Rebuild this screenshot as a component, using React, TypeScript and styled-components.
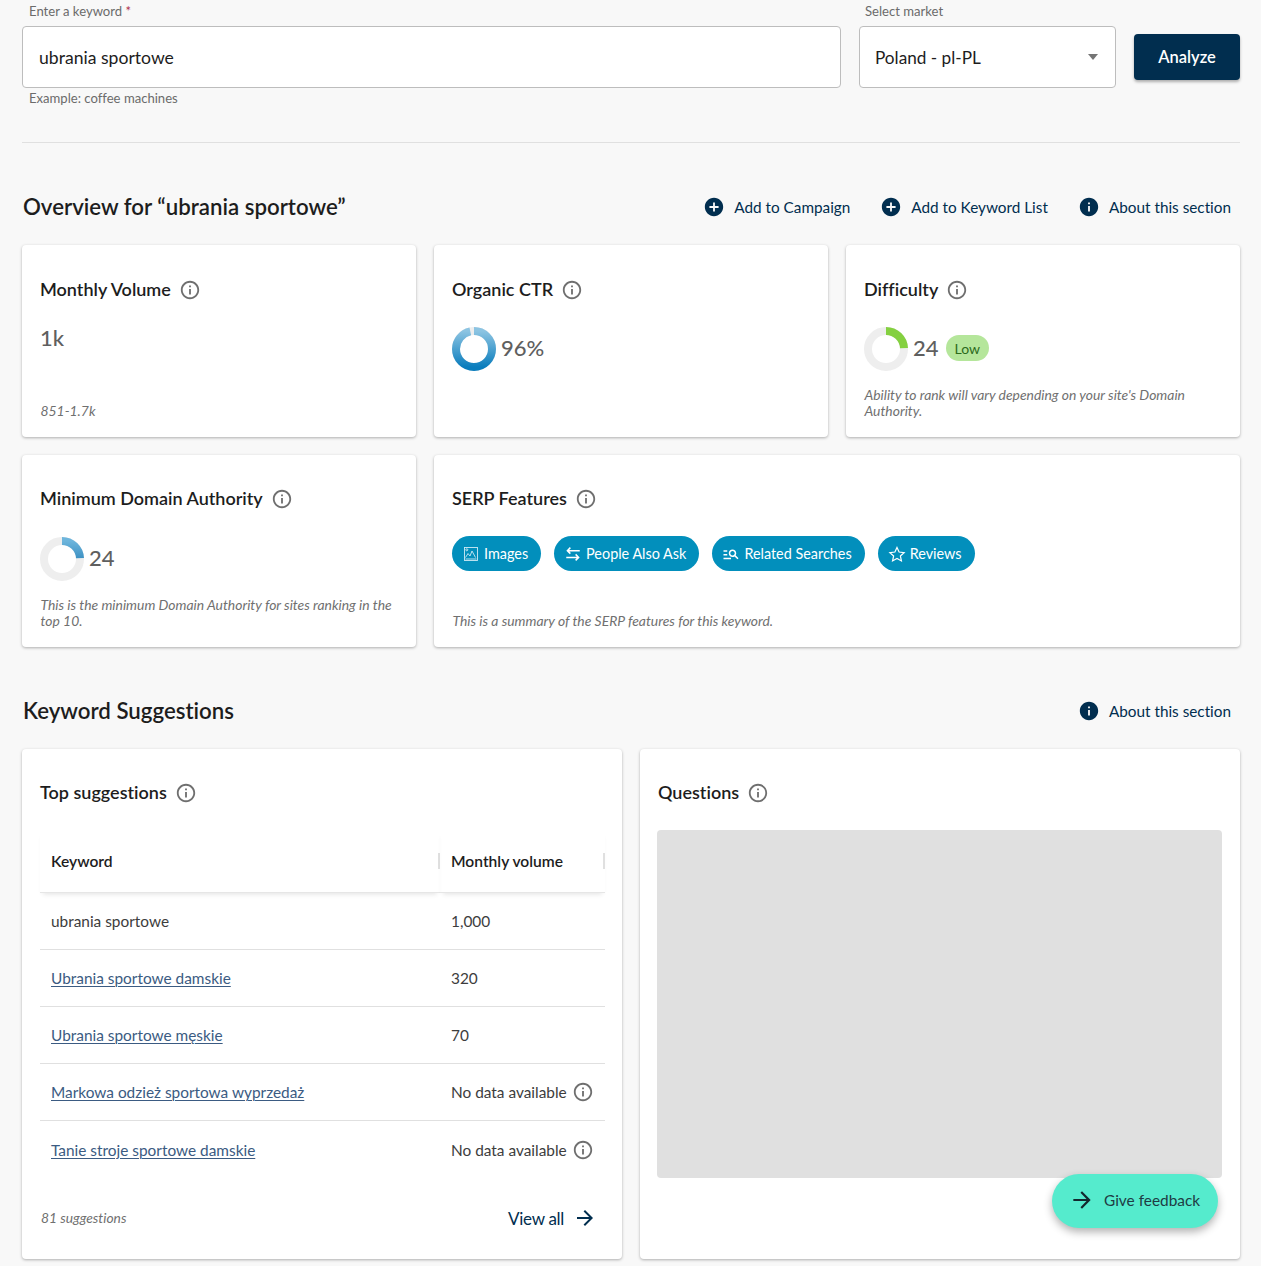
import React from "react";
import styled, { createGlobalStyle } from "styled-components";

const Global = createGlobalStyle`
  html, body { margin: 0; padding: 0; background: #f8f8f8; }
  body { font-family: Lato, "Open Sans", sans-serif; color: #1d1d1d; height: 1266px; overflow: hidden; position: relative; font-variant-ligatures: none; }
  * { box-sizing: border-box; }
`;

const Page = styled.div`
  padding: 0 21px 0 22px;
`;
const SearchRow = styled.div`
  display: flex;
  height: 143px;
  border-bottom: 1px solid #e0e0e0;
`;
const Field = styled.div<{ $w: number; $mr: number }>`
  width: ${(p) => p.$w}px;
  margin-right: ${(p) => p.$mr}px;
  flex: none;
`;
const FieldLabel = styled.label`
  display: block;
  height: 26px;
  padding: 4px 0 0 7px;
  font-size: 13.1px;
  line-height: 15px;
  color: #6b6b6b;
`;
const SelectLabel = styled(FieldLabel)`
  padding-left: 6px;
`;
const Req = styled.span`
  color: #b0304a;
`;
const InputBox = styled.div`
  height: 62px;
  background: #fff;
  border: 1px solid #bdbdbd;
  border-radius: 4px;
  padding: 0 16px;
  display: flex;
  align-items: center;
  justify-content: space-between;
  font-size: 17.6px;
  color: #1d1d1d;
`;
const SelectBox = styled(InputBox)`
  padding-left: 15px;
  font-size: 17.2px;
`;
const Caret = styled.span`
  width: 0;
  height: 0;
  margin-right: 1px;
  border-left: 5.5px solid transparent;
  border-right: 5.5px solid transparent;
  border-top: 6px solid #757575;
`;
const Helper = styled.div`
  padding: 2px 0 0 7px;
  font-size: 13.1px;
  line-height: 16px;
  color: #6b6b6b;
`;
const AnalyzeButton = styled.button`
  margin-top: 34px;
  width: 106px;
  height: 46px;
  padding: 0 0 1px;
  border: none;
  border-radius: 4px;
  background: #012e4f;
  color: #fff;
  font: 600 16.5px Lato, sans-serif;
  font-variant-ligatures: none;
  box-shadow: 0 2px 3px rgba(0, 0, 0, 0.3);
`;
const SectionHeader = styled.div`
  display: flex;
  align-items: center;
  justify-content: space-between;
  margin-top: 49px;
  height: 30px;
  margin-bottom: 23px;
  padding-right: 9px;
`;
const SectionTitle = styled.h2`
  margin: -1px 0 0 1px;
  font-size: 22.25px;
  font-weight: 600;
  line-height: 30px;
  color: #1d1d1d;
`;
const Actions = styled.div`
  display: flex;
  gap: 30px;
`;
const Action = styled.a`
  display: flex;
  align-items: center;
  gap: 9px;
  font-size: 15.3px;
  color: #012e4f;
`;
const ActionLabel = styled.span`
  margin-top: -1px;
`;
const CardGrid = styled.div`
  display: grid;
  grid-template-columns: repeat(3, 394px);
  grid-auto-rows: 192px;
  gap: 18px;
`;
const Card = styled.section<{ $span?: number; $pt?: number }>`
  grid-column: span ${(p) => p.$span ?? 1};
  background: #fff;
  border-radius: 4px;
  box-shadow: 0 1px 3px rgba(0, 0, 0, 0.3);
  padding: ${(p) => p.$pt ?? 31}px 18px 0;
  display: flex;
  flex-direction: column;
`;
const CardTitle = styled.h3`
  margin: -1px 0 1px;
  display: flex;
  align-items: center;
  gap: 8px;
  font-size: 18px;
  font-weight: 600;
  line-height: 26px;
  color: #1d1d1d;
  height: 26px;
  & > svg {
    margin-top: 2px;
  }
`;
const Stat = styled.div<{ $mt?: number }>`
  display: flex;
  align-items: center;
  margin-top: ${(p) => p.$mt ?? 24}px;
  font-size: 22px;
  font-weight: 500;
  color: #5f5f5f;
  height: 44px;
  gap: 5px;
`;
const StatValue = styled.span`
  margin-top: -4px;
`;
const PlainStat = styled.div`
  margin-top: 21px;
  font-size: 22px;
  font-weight: 500;
  line-height: 28px;
  color: #5f5f5f;
`;
const Note = styled.p`
  margin: auto 0 18px 0.5px;
  font-size: 13.9px;
  line-height: 16px;
  font-style: italic;
  color: #707070;
`;
const LowBadge = styled.span`
  margin: -2px 0 0 2px;
  background: #b5e69b;
  color: #2c6b1c;
  font-size: 14px;
  font-weight: 400;
  height: 26px;
  line-height: 28px;
  padding: 0 9px;
  border-radius: 13px;
`;
const Chips = styled.div`
  display: flex;
  gap: 13px;
  margin-top: 24px;
`;
const Chip = styled.span`
  display: inline-flex;
  align-items: center;
  gap: 4px;
  height: 35px;
  padding: 0 13px 0 10px;
  border-radius: 18px;
  background: #028fbc;
  color: #fff;
  font-size: 14.4px;
`;
const WideGrid = styled.div`
  display: grid;
  grid-template-columns: 600px 600px;
  gap: 18px;
`;
const BigCard = styled(Card)`
  height: 510px;
  position: relative;
`;
const Table = styled.table`
  border-collapse: separate;
  border-spacing: 0;
  width: 565px;
  margin-top: 24px;
  table-layout: fixed;
`;
const Th = styled.th<{ $w: number }>`
  width: ${(p) => p.$w}px;
  height: 63px;
  padding: 0 0 1px 11px;
  text-align: left;
  font-size: 15.6px;
  font-weight: 600;
  color: #1d1d1d;
  position: relative;
  border-bottom: 1px solid #e6e6e6;
  box-shadow: 0 4px 5px -3px rgba(0, 0, 0, 0.12);
  &::after {
    content: "";
    position: absolute;
    right: 0;
    top: 23px;
    height: 16px;
    width: 2px;
    background: #e0e0e0;
  }
`;
const Td = styled.td`
  height: 57px;
  padding: 0 0 0 11px;
  font-size: 15.4px;
  color: #3d3d3d;
  border-bottom: 1px solid #e0e0e0;
`;
const LastTd = styled(Td)`
  border-bottom: none;
`;
const KeywordLink = styled.a`
  color: #3b5b82;
  text-decoration: underline;
  text-underline-offset: 2px;
  text-decoration-thickness: 1px;
`;
const NoData = styled.span`
  display: flex;
  align-items: center;
  gap: 5px;
`;
const TableFooter = styled.div`
  display: flex;
  align-items: center;
  justify-content: space-between;
  margin-top: 28px;
  padding: 0 7px 0 1px;
`;
const Count = styled.span`
  margin-top: -2px;
  font-size: 13.8px;
  font-style: italic;
  color: #707070;
`;
const ViewAll = styled.a`
  display: flex;
  align-items: center;
  gap: 9px;
  font-size: 17px;
  letter-spacing: -0.3px;
  color: #012e4f;
`;
const Skeleton = styled.div`
  margin: 24px 0 0 -1px;
  height: 348px;
  background: #e0e0e0;
  border-radius: 4px;
`;
const Feedback = styled.button`
  position: absolute;
  left: 1052px;
  top: 1174px;
  width: 166px;
  height: 54px;
  border: none;
  border-radius: 27px;
  background: #55ebcd;
  color: #1f3c44;
  font: 400 15.4px Lato, sans-serif;
  font-variant-ligatures: none;
  display: flex;
  align-items: center;
  gap: 9px;
  padding: 0 0 2px 17px;
  box-shadow: 0 4px 8px rgba(0, 0, 0, 0.3);
`;

const Icon = ({ d, size = 24, color = "currentColor" }: { d: string; size?: number; color?: string }) => (
  <svg width={size} height={size} viewBox="0 0 24 24" fill={color} style={{ flex: "none" }}>
    <path d={d} />
  </svg>
);
const Line = ({ d, sw = 2 }: { d: string; sw?: number }) => (
  <svg width="18" height="18" viewBox="0 0 24 24" fill="none" stroke="currentColor" strokeWidth={sw} style={{ flex: "none" }}>
    <path d={d} />
  </svg>
);
const INFO_O = "M11 7h2v2h-2zm0 4h2v6h-2zm1-9C6.48 2 2 6.48 2 12s4.48 10 10 10 10-4.48 10-10S17.52 2 12 2zm0 18c-4.41 0-8-3.59-8-8s3.59-8 8-8 8 3.59 8 8-3.59 8-8 8z";
const INFO_F = "M12 2C6.48 2 2 6.48 2 12s4.48 10 10 10 10-4.48 10-10S17.52 2 12 2zm1 15h-2v-6h2v6zm0-8h-2V7h2v2z";
const ADD_F = "M12 2C6.48 2 2 6.48 2 12s4.48 10 10 10 10-4.48 10-10S17.52 2 12 2zm5 11h-4v4h-2v-4H7v-2h4V7h2v4h4v2z";
const ARROW = "M12 4l-1.41 1.41L16.17 11H4v2h12.17l-5.58 5.59L12 20l8-8z";
const STAR = "M12 3.2l2.8 6.1 6.7.8-5 4.5 1.4 6.6-5.9-3.3-5.9 3.3 1.4-6.6-5-4.5 6.7-.8z";
const SWAP = "M21 7.5H4.5M8.5 3.5l-4 4 4 4M3 16.5h16.5M15.5 12.5l4 4-4 4";
const SEARCH = "M7 9H2V7h5v2zm0 3H2v2h5v-2zm13.59 7-3.83-3.83c-.8.52-1.74.83-2.76.83-2.76 0-5-2.24-5-5s2.24-5 5-5 5 2.24 5 5c0 1.02-.31 1.96-.83 2.75L22 17.59 20.59 19zM17 11c0-1.65-1.35-3-3-3s-3 1.35-3 3 1.35 3 3 3 3-1.35 3-3zM2 19h10v-2H2v2z";

const Info = ({ size = 22 }: { size?: number }) => <Icon d={INFO_O} size={size} color="#6f6f6f" />;

const ImageIcon = () => (
  <svg width="18" height="18" viewBox="0 0 18 18" fill="none" stroke="#cfeaf4" strokeWidth="0.9" style={{ flex: "none" }}>
    <rect x="2.5" y="2.5" width="13" height="13" />
    <path d="M3.5 12.5l2.5-4 2 2.5 2-5 3.5 6.5" />
    <circle cx="4.8" cy="4.8" r="1" />
    <path d="M3.5 14h11" />
  </svg>
);

let gid = 0;
const Donut = ({ pct, from, to }: { pct: number; from: string; to: string }) => {
  const id = `g${gid++}`;
  const r = 18;
  const c = 2 * Math.PI * r;
  return (
    <svg width="44" height="44" viewBox="0 0 44 44" style={{ flex: "none" }}>
      <defs>
        <linearGradient id={id} x1="1" y1="0" x2="0" y2="0">
          <stop offset="0" stopColor={from} />
          <stop offset="1" stopColor={to} />
        </linearGradient>
      </defs>
      <circle cx="22" cy="22" r={r} fill="none" stroke="#eeeeee" strokeWidth="8" />
      <circle
        cx="22"
        cy="22"
        r={r}
        fill="none"
        stroke={`url(#${id})`}
        strokeWidth="8"
        strokeDasharray={`${(c * pct) / 100} ${c}`}
        transform="rotate(-90 22 22)"
      />
    </svg>
  );
};

const rows = [
  { k: "Ubrania sportowe damskie", v: "320" },
  { k: "Ubrania sportowe męskie", v: "70" },
  { k: "Markowa odzież sportowa wyprzedaż", v: "" },
];

export default function App() {
  return (
    <>
      <Global />
      <Page>
        <SearchRow>
          <Field $w={819} $mr={18}>
            <FieldLabel>
              Enter a keyword <Req>*</Req>
            </FieldLabel>
            <InputBox>ubrania sportowe</InputBox>
            <Helper>Example: coffee machines</Helper>
          </Field>
          <Field $w={257} $mr={18}>
            <SelectLabel>Select market</SelectLabel>
            <SelectBox>
              Poland - pl-PL
              <Caret />
            </SelectBox>
          </Field>
          <AnalyzeButton>Analyze</AnalyzeButton>
        </SearchRow>

        <SectionHeader>
          <SectionTitle>Overview for “ubrania sportowe”</SectionTitle>
          <Actions>
            <Action>
              <Icon d={ADD_F} size={22} color="#012e4f" />
              <ActionLabel>Add to Campaign</ActionLabel>
            </Action>
            <Action>
              <Icon d={ADD_F} size={22} color="#012e4f" />
              <ActionLabel>Add to Keyword List</ActionLabel>
            </Action>
            <Action>
              <Icon d={INFO_F} size={22} color="#012e4f" />
              <ActionLabel>About this section</ActionLabel>
            </Action>
          </Actions>
        </SectionHeader>

        <CardGrid>
          <Card $pt={32}>
            <CardTitle>
              Monthly Volume <Info />
            </CardTitle>
            <PlainStat>1k</PlainStat>
            <Note>851-1.7k</Note>
          </Card>
          <Card $pt={32}>
            <CardTitle>
              Organic CTR <Info />
            </CardTitle>
            <Stat>
              <Donut pct={96} from="#8cc4e2" to="#0a7dbd" />
              <StatValue>96%</StatValue>
            </Stat>
          </Card>
          <Card $pt={32}>
            <CardTitle>
              Difficulty <Info />
            </CardTitle>
            <Stat>
              <Donut pct={24} from="#84d040" to="#84d040" />
              <StatValue>24</StatValue>
              <LowBadge>Low</LowBadge>
            </Stat>
            <Note>Ability to rank will vary depending on your site's Domain Authority.</Note>
          </Card>
          <Card>
            <CardTitle>
              Minimum Domain Authority <Info />
            </CardTitle>
            <Stat $mt={25}>
              <Donut pct={24} from="#6db5dc" to="#0a6aa8" />
              <StatValue>24</StatValue>
            </Stat>
            <Note>This is the minimum Domain Authority for sites ranking in the top 10.</Note>
          </Card>
          <Card $span={2}>
            <CardTitle>
              SERP Features <Info />
            </CardTitle>
            <Chips>
              <Chip>
                <ImageIcon />
                Images
              </Chip>
              <Chip>
                <Line d={SWAP} />
                People Also Ask
              </Chip>
              <Chip>
                <Icon d={SEARCH} size={18} />
                Related Searches
              </Chip>
              <Chip>
                <Line d={STAR} sw={1.6} />
                Reviews
              </Chip>
            </Chips>
            <Note>This is a summary of the SERP features for this keyword.</Note>
          </Card>
        </CardGrid>

        <SectionHeader>
          <SectionTitle>Keyword Suggestions</SectionTitle>
          <Actions>
            <Action>
              <Icon d={INFO_F} size={22} color="#012e4f" />
              <ActionLabel>About this section</ActionLabel>
            </Action>
          </Actions>
        </SectionHeader>

        <WideGrid>
          <BigCard>
            <CardTitle>
              Top suggestions <Info />
            </CardTitle>
            <Table>
              <thead>
                <tr>
                  <Th $w={400}>Keyword</Th>
                  <Th $w={165}>Monthly volume</Th>
                </tr>
              </thead>
              <tbody>
                <tr>
                  <Td>ubrania sportowe</Td>
                  <Td>1,000</Td>
                </tr>
                {rows.map((r) => (
                  <tr key={r.k}>
                    <Td>
                      <KeywordLink>{r.k}</KeywordLink>
                    </Td>
                    <Td>
                      {r.v || (
                        <NoData>
                          No data available <Info />
                        </NoData>
                      )}
                    </Td>
                  </tr>
                ))}
                <tr>
                  <LastTd>
                    <KeywordLink>Tanie stroje sportowe damskie</KeywordLink>
                  </LastTd>
                  <LastTd>
                    <NoData>
                      No data available <Info />
                    </NoData>
                  </LastTd>
                </tr>
              </tbody>
            </Table>
            <TableFooter>
              <Count>81 suggestions</Count>
              <ViewAll>
                View all <Icon d={ARROW} color="#012e4f" />
              </ViewAll>
            </TableFooter>
          </BigCard>
          <BigCard>
            <CardTitle>
              Questions <Info />
            </CardTitle>
            <Skeleton />
          </BigCard>
        </WideGrid>
      </Page>
      <Feedback>
        <Icon d={ARROW} size={26} color="#13282e" />
        Give feedback
      </Feedback>
    </>
  );
}
